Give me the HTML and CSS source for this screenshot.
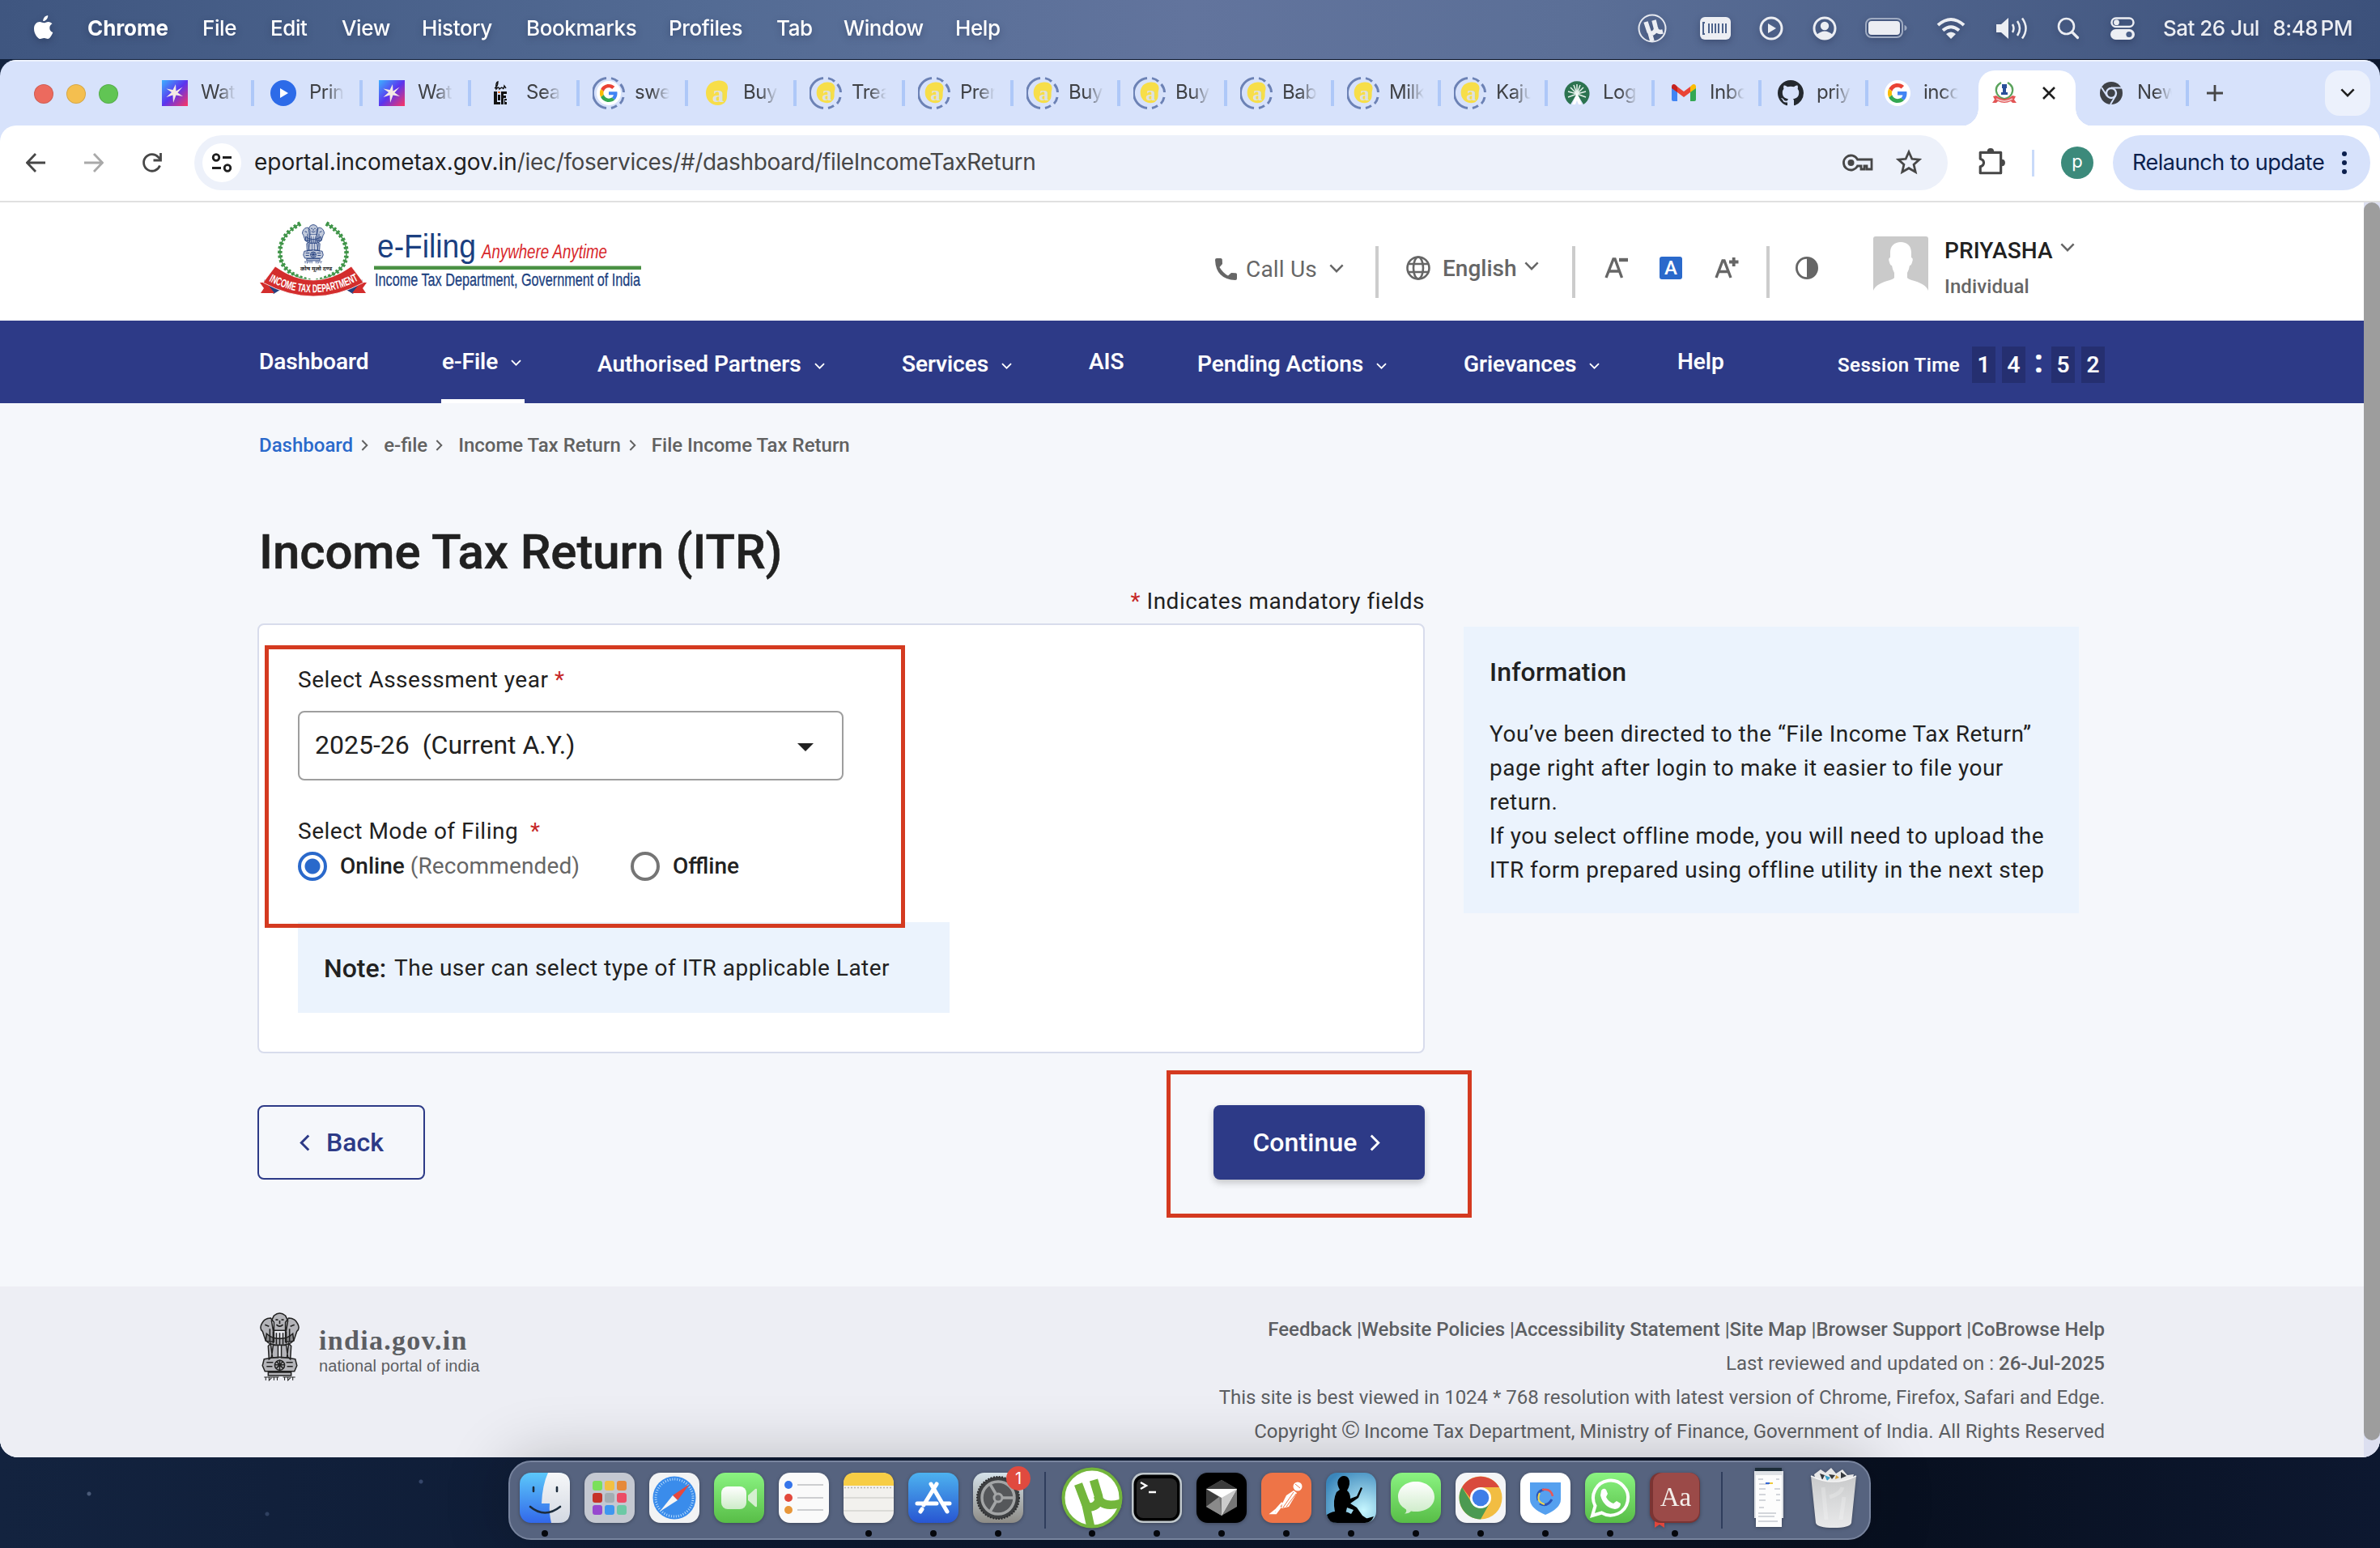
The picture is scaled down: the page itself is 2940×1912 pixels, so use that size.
FILE: index.html
```html
<!DOCTYPE html>
<html lang="en">
<head>
<meta charset="utf-8">
<title>Income Tax Return (ITR)</title>
<link rel="stylesheet" href="styles.css">
</head>
<body>
<svg class="defs" width="0" height="0" aria-hidden="true">
  <defs>
    <linearGradient id="gPurple" x1="0" y1="0" x2="1" y2="1"><stop offset="0" stop-color="#3db0ff"/><stop offset=".5" stop-color="#5a35ee"/><stop offset="1" stop-color="#ff3560"/></linearGradient>
    <linearGradient id="gFinder" x1="0" y1="0" x2="0" y2="1"><stop offset="0" stop-color="#5cc8fa"/><stop offset="1" stop-color="#3268ea"/></linearGradient>
    <linearGradient id="gGrey" x1="0" y1="0" x2="0" y2="1"><stop offset="0" stop-color="#f6f7f9"/><stop offset="1" stop-color="#d3d8e2"/></linearGradient>
    <linearGradient id="gGreen" x1="0" y1="0" x2="0" y2="1"><stop offset="0" stop-color="#8af381"/><stop offset="1" stop-color="#58bd47"/></linearGradient>
    <linearGradient id="gBlue" x1="0" y1="0" x2="0" y2="1"><stop offset="0" stop-color="#4db2ef"/><stop offset="1" stop-color="#2856d2"/></linearGradient>
    <linearGradient id="gSet" x1="0" y1="0" x2="0" y2="1"><stop offset="0" stop-color="#d5e2ea"/><stop offset="1" stop-color="#8d8b86"/></linearGradient>
    <radialGradient id="gKindle" cx=".75" cy=".75" r=".9"><stop offset="0" stop-color="#c6f7ff"/><stop offset="1" stop-color="#3a86bb"/></radialGradient>
    <linearGradient id="gTrash" x1="0" y1="0" x2="0" y2="1"><stop offset="0" stop-color="#c9cacb"/><stop offset="1" stop-color="#e9e9ea"/></linearGradient>
    <linearGradient id="gBubble" x1="0" y1="0" x2="0" y2="1"><stop offset="0" stop-color="#ffffff"/><stop offset="1" stop-color="#cdebc8"/></linearGradient>
  </defs>
  <symbol id="chev" viewBox="0 0 20 12"><path d="M1.5 1.5 10 10l8.500-8.500" fill="none" stroke="currentColor" stroke-width="2.800"/></symbol>
  <symbol id="chevr" viewBox="0 0 12 20"><path d="M1.500 1.500 10 10l-8.500 8.500" fill="none" stroke="currentColor" stroke-width="2.800"/></symbol>
  <symbol id="spark" viewBox="0 0 32 32"><path fill="url(#gPurple)" d="M0 0h32v32H0z"/><path fill="#f4eae4" d="m17 5 .5 8.500 8-5-6 7 6.500 4.500-8.500-1.500-3.500 9.500-.5-9.500-8 2.500 6.500-6-6.500-4.500 8 1.500z"/></symbol>
  <symbol id="ring" viewBox="0 0 40 40"><path fill="none" stroke="#6c82b5" stroke-width="3" d="M17 1.600A18.500 18.500 0 0 0 17 38.400M23 1.600q5 1 8 4M34.500 9q4 5 4 10M38 25q-1 5-4 8M30 35.500q-3 2-7 3"/></symbol>
  <symbol id="yel" viewBox="0 0 32 32"><path fill="#f7de49" d="M15 1c9-2 15 3 14 10-1 3-1 5-1 9 0 7-5 11-11 11C9 31 2 25 2 16 2 8 7 2 15 1z"/><text x="10" y="27" font-family="Liberation Serif, serif" font-weight="700" font-size="29" fill="#d7e2fb" fill-opacity=".85">a</text></symbol>
  <symbol id="goog" viewBox="0 0 48 48"><path fill="#EA4335" d="M24 9.500c3.500 0 6.700 1.200 9.200 3.600l6.900-6.900C35.900 2.400 30.500 0 24 0 14.600 0 6.500 5.400 2.600 13.200l8 6.200C12.400 13.700 17.700 9.500 24 9.500z"/><path fill="#4285F4" d="M47 24.500c0-1.600-.2-3.100-.4-4.500H24v9h12.900c-.6 3-2.200 5.500-4.800 7.200l7.700 6C44.400 38 47 31.800 47 24.500z"/><path fill="#FBBC05" d="M10.500 28.600a14.500 14.500 0 0 1 0-9.200l-8-6.200a24 24 0 0 0 0 21.600z"/><path fill="#34A853" d="M24 48c6.500 0 11.900-2.100 15.900-5.800l-7.700-6c-2.200 1.500-5 2.300-8.200 2.300-6.300 0-11.600-4.200-13.500-9.900l-8 6.200C6.500 42.600 14.600 48 24 48z"/></symbol>
  <symbol id="lion" viewBox="0 0 50 84">
    <g fill="currentColor" fill-opacity=".28" stroke="currentColor" stroke-width="1.500">
      <path d="M18 4q7-6 14 0l3 6-2 12H17L15 10zM14 7q-8 0-11 7-3 6 1 9l4 12 10 1V12zM36 7q8 0 11 7 3 6-1 9l-4 12-10 1V12z"/>
      <path d="M9 26l-1 8q4 6 17 6t17-6l-1-8q-6 6-16 6T9 26z"/>
      <path d="M17 40h6v15h-8zM27 40h6l2 15h-8zM11 41l3-3 2 16-4 3zM39 41l-3-3-2 16 4 3z"/>
      <path d="M6 57q19-5 38 0l2 8-3 7H7l-3-7z"/><path d="M11 73h28v4H11z"/>
    </g>
    <path fill="none" stroke="currentColor" stroke-width="1.600" d="M20 9h3M27 9h3M21 15q4 4 8 0M25 10v4M7 15l5 2M38 17l5-2M13 20v16M17 23v15M21 25v14M25 25v15M29 25v14M33 23v15M37 20v16M9 61h8M33 61h8M9 66h7M34 66h7M25 58v13M19 64h12M21 60l8 8M29 60l-8 8"/>
    <circle cx="25" cy="64.500" r="6" fill="none" stroke="currentColor" stroke-width="1.500"/>
    <path stroke="currentColor" stroke-width="1" fill="none" d="M6 79h18M29 79h15M8 79v4M12 79v4l3-3M18 79v4M22 79v4M31 79v4M35 79v4l3-3M41 79v4"/>
  </symbol>
</svg>

<header class="menubar">
  <svg class="apple" viewBox="0 0 26 32"><path fill="#fff" d="M18.200 1c.2 2-.6 3.800-1.700 5-1.100 1.300-2.700 2.200-4.300 2.100-.2-1.800.7-3.700 1.700-4.900C15 2 16.800 1.100 18.200 1zM23.500 11.300c-2 1.200-3.200 2.900-3.200 5.200 0 2.700 1.600 4.700 4 5.600-1 2.900-3.600 8-6.300 8-1.700 0-2.400-1-4.500-1s-2.900 1-4.500 1C5.600 30.100 1 23.800 1 17.400c0-5.300 3.400-8.400 7-8.400 2.100 0 3.900 1.300 5.200 1.300 1.200 0 3.200-1.400 5.500-1.400 2 0 3.700.9 4.800 2.400z"/></svg>
  <nav class="menus"><b>Chrome</b><span>File</span><span>Edit</span><span>View</span><span>History</span><span>Bookmarks</span><span>Profiles</span><span>Tab</span><span>Window</span><span>Help</span></nav>
  <div class="status">
    <svg width="36" height="36" viewBox="0 0 36 36"><circle cx="18" cy="18" r="16.500" fill="none" stroke="#e6e9f0" stroke-width="2"/><path fill="none" stroke="#eceef3" stroke-width="5.500" d="M10 10l4 12q2 4 6 1t2-7L20 8M22 16q1 8 9 6M15 23l3 11"/></svg>
    <svg width="38" height="28" viewBox="0 0 38 28"><rect width="38" height="28" rx="6" fill="#eceef3"/><path stroke="#4d638c" stroke-width="2" d="M6 7H4v14h2M11 8v12M15 8v12M19 8v12M23 8v12M28 8v12M32 8v12" fill="none"/></svg>
    <svg width="30" height="30" viewBox="0 0 30 30"><circle cx="15" cy="15" r="13" fill="none" stroke="#eceef3" stroke-width="3"/><path fill="#eceef3" d="M11 9l10 6-10 6z"/></svg>
    <svg width="30" height="30" viewBox="0 0 30 30"><circle cx="15" cy="15" r="13" fill="none" stroke="#eceef3" stroke-width="3"/><circle cx="15" cy="12" r="5.200" fill="#eceef3"/><path fill="#eceef3" d="M5 23q10-9 20 0-10 9-20 0z"/></svg>
    <svg width="52" height="26" viewBox="0 0 52 26"><rect x="1" y="1" width="45" height="23" rx="7" fill="none" stroke="#9fabc2" stroke-width="2"/><rect x="4" y="4" width="39" height="17" rx="4" fill="#eceef3"/><path fill="#9fabc2" d="M48.500 9q3 1 3 3.500t-3 3.500z"/></svg>
    <svg width="36" height="28" viewBox="0 0 36 28"><path fill="none" stroke="#eceef3" stroke-width="4" d="M2 10q16-14 32 0M8 16.500q10-8.500 20 0"/><path fill="#eceef3" d="M12 21q6-5 12 0l-6 6z"/></svg>
    <svg width="42" height="28" viewBox="0 0 42 28"><path fill="#eceef3" d="M1 9h6l9-8v26l-9-8H1z"/><path fill="none" stroke="#eceef3" stroke-width="2.500" d="M21 9q3 5 0 10M27 5q6 9 0 18M33 1.500q9 12.500 0 25"/></svg>
    <svg width="28" height="28" viewBox="0 0 28 28"><circle cx="11.500" cy="11.500" r="9.500" fill="none" stroke="#eceef3" stroke-width="2.600"/><path stroke="#eceef3" stroke-width="3.200" stroke-linecap="round" d="m18.500 18.500 7 7"/></svg>
    <svg width="30" height="28" viewBox="0 0 30 28"><rect x="1.500" y="1.500" width="27" height="10.500" rx="5.200" fill="none" stroke="#eceef3" stroke-width="2.500"/><circle cx="7.500" cy="6.700" r="3.400" fill="#eceef3"/><rect y="15" width="30" height="13" rx="6.500" fill="#eceef3"/><circle cx="23" cy="21.500" r="3.600" fill="#4a5f88"/></svg>
    <span class="date">Sat 26 Jul</span><span class="clock">8:48 PM</span>
  </div>
</header>

<section class="window">
  <div class="tabstrip">
    <div class="lights"><i class="red"></i><i class="amber"></i><i class="green"></i></div>
    <div class="tab w134"><svg><use href="#spark"/></svg><span>Wat</span></div>
    <div class="tab w134"><svg viewBox="0 0 32 32"><circle cx="16" cy="16" r="16" fill="#2d6be8"/><path fill="#fff" d="m12 10 10 6-10 6z"/></svg><span>Prin</span></div>
    <div class="tab w134"><svg><use href="#spark"/></svg><span>Wat</span></div>
    <div class="tab w134"><svg viewBox="0 0 32 32"><path fill="none" stroke="#111" stroke-width="1.400" d="M9 10q4-2 4-8-3 1-2 9 3-4 4 0 3-3 4-1 1 2 2-3l2 3"/><path fill="#111" d="M8 14h4v13h4v3H8zM13 18h3v7h-3zM17 14h7v3h-4v2h3v3h-3v8h-3zM21 23h3v2h-2v2h2v3h-3z"/><path fill="#ef7d33" d="M13 14h3v2h-3z"/></svg><span>Sea</span></div>
    <div class="tab w134 ringed"><svg viewBox="0 0 40 40"><use href="#ring"/><circle cx="20" cy="20" r="15" fill="#fff"/><use href="#goog" x="9" y="9" width="22" height="22"/></svg><span>swe</span></div>
    <div class="tab w134"><svg><use href="#yel"/></svg><span>Buy</span></div>
    <div class="tab w134 ringed"><svg viewBox="0 0 40 40"><use href="#ring"/><use href="#yel" x="7" y="6" width="27" height="27"/></svg><span>Trea</span></div>
    <div class="tab w134 ringed"><svg viewBox="0 0 40 40"><use href="#ring"/><use href="#yel" x="7" y="6" width="27" height="27"/></svg><span>Pren</span></div>
    <div class="tab ringed"><svg viewBox="0 0 40 40"><use href="#ring"/><use href="#yel" x="7" y="6" width="27" height="27"/></svg><span>Buy</span></div>
    <div class="tab ringed"><svg viewBox="0 0 40 40"><use href="#ring"/><use href="#yel" x="7" y="6" width="27" height="27"/></svg><span>Buy</span></div>
    <div class="tab ringed"><svg viewBox="0 0 40 40"><use href="#ring"/><use href="#yel" x="7" y="6" width="27" height="27"/></svg><span>Bab</span></div>
    <div class="tab ringed"><svg viewBox="0 0 40 40"><use href="#ring"/><use href="#yel" x="7" y="6" width="27" height="27"/></svg><span>Milk</span></div>
    <div class="tab ringed"><svg viewBox="0 0 40 40"><use href="#ring"/><use href="#yel" x="7" y="6" width="27" height="27"/></svg><span>Kaju</span></div>
    <div class="tab"><svg viewBox="0 0 32 32"><path fill="#2c7350" d="M8 30A15.500 15.500 0 1 1 24 30l-6-10h-4z"/><path stroke="#e6f2ec" stroke-width="1.500" d="M16 17V5M16 17l-4-11M16 17 8 9M16 17 5 14M16 17 20 6M16 17l8-8M16 17l11-3M16 17l11 4M16 17 5 21"/><path fill="#fff" d="m16 15 6 15h-4l-2-5-2 5h-4z"/></svg><span>Log</span></div>
    <div class="tab"><svg viewBox="0 0 32 32"><path fill="#4285f4" d="M1 8v16q0 2 2 2h5V14z"/><path fill="#34a853" d="M31 8v16q0 2-2 2h-5V14z"/><path fill="#fbbc04" d="M24 8v7l7-5V8c0-3-3-4-5-2z"/><path fill="#c5221f" d="M8 15V8L6 6C4 4 1 5 1 8v2z"/><path fill="#ea4335" d="M8 8v7l8 6 8-6V8l-8 6z"/></svg><span>Inbo</span></div>
    <div class="tab"><svg viewBox="0 0 16 16"><path fill="#24292f" d="M8 0C3.580 0 0 3.580 0 8c0 3.540 2.290 6.530 5.470 7.590.4.070.55-.17.55-.38 0-.19-.01-.82-.01-1.490-2.010.37-2.530-.49-2.690-.94-.09-.23-.48-.94-.82-1.130-.28-.15-.68-.52-.01-.53.63-.01 1.080.58 1.230.82.72 1.210 1.870.87 2.330.66.07-.52.28-.87.51-1.070-1.780-.2-3.640-.89-3.640-3.950 0-.87.31-1.590.82-2.150-.08-.2-.36-1.020.08-2.120 0 0 .67-.21 2.200.82a7.600 7.600 0 0 1 4 0c1.530-1.040 2.200-.82 2.200-.82.44 1.100.16 1.920.08 2.120.51.56.82 1.270.82 2.150 0 3.070-1.870 3.750-3.650 3.950.29.25.54.73.54 1.480 0 1.070-.01 1.930-.01 2.200 0 .21.15.46.55.38A8 8 0 0 0 16 8c0-4.420-3.580-8-8-8z"/></svg><span>priy</span></div>
    <div class="tab nosep"><svg viewBox="0 0 32 32"><circle cx="16" cy="16" r="16" fill="#fff"/><use href="#goog" x="4" y="4" width="24" height="24"/></svg><span>inco</span></div>
    <div class="tab active"><svg viewBox="0 0 32 32"><path fill="none" stroke="#5aa35c" stroke-width="2.200" d="M12 3Q3 8 7 17q3 5 9 6 6-1 9-6 4-9-5-14"/><path fill="#2a4f9a" d="M13 5h6v5h-1v5h2v3h-8v-3h2v-5h-1z"/><path fill="#df4242" fill-opacity=".9" d="M2 20l4-1q10 8 20 0l4 1-2 4 3 4h-5l-2-2q-8 4-16 0l-2 2H1l3-4z"/><path stroke="#fff" stroke-opacity=".6" stroke-width="2" fill="none" d="M6 23q10 6 20 0"/></svg><svg class="x" viewBox="0 0 16 16"><path d="m1 1 14 14M15 1 1 15" stroke="#1f1f1f" stroke-width="2.600"/></svg></div>
    <div class="tab"><svg viewBox="0 0 32 32"><circle cx="16" cy="16" r="14" fill="#3f4247"/><circle cx="16" cy="16" r="6" fill="#3f4247" stroke="#d7e2fb" stroke-width="2.400"/><path stroke="#d7e2fb" stroke-width="2" d="M16 9.500h13M10.500 19 4 9M21.500 19 15 30"/></svg><span>New</span></div>
    <svg class="plus" viewBox="0 0 20 20"><path stroke="#474747" stroke-width="2.800" d="M10 0v20M0 10h20"/></svg>
    <div class="tabsearch"><svg width="18" height="11"><use href="#chev"/></svg></div>
  </div>

  <div class="toolbar">
    <svg class="back" viewBox="0 0 24 24"><path d="M24 12H2M12 1 1.500 12 12 23" fill="none" stroke="#474747" stroke-width="2.800"/></svg>
    <svg class="fwd" viewBox="0 0 24 24"><path d="M0 12h22M12 1l10.500 11L12 23" fill="none" stroke="#a9a9a9" stroke-width="2.800"/></svg>
    <svg class="reload" viewBox="0 0 26 26"><path d="M22.500 16.500A10.300 10.300 0 1 1 20.500 6l3 3" fill="none" stroke="#474747" stroke-width="2.800"/><path d="M23.500 1v9h-9" fill="none" stroke="#474747" stroke-width="2.800"/></svg>
    <div class="omnibox">
      <span class="tune"><svg width="26" height="24" viewBox="0 0 26 24" fill="none" stroke="#1f1f1f" stroke-width="2.800"><circle cx="6" cy="5.500" r="3.800"/><path d="M14 5.500h11M1 18.500h11"/><circle cx="20" cy="18.500" r="3.800"/></svg></span>
      <span class="url"><b>eportal.incometax.gov.in</b>/iec/foservices/#/dashboard/fileIncomeTaxReturn</span>
      <svg class="key" viewBox="0 0 38 22"><path fill="none" stroke="#474747" stroke-width="2.800" d="M18.500 7A9 9 0 1 0 18.500 15H23v4h4v-4h3v4h6V7z"/><circle cx="10.500" cy="11" r="4" fill="#474747"/></svg>
      <svg class="star" viewBox="0 0 30 30"><path fill="none" stroke="#474747" stroke-width="2.600" d="m15 3.500 3.600 8 8.600.8-6.500 5.800 2 8.600L15 22.200l-7.700 4.500 2-8.600-6.500-5.800 8.600-.8z"/></svg>
    </div>
    <svg class="ext" viewBox="0 0 34 34"><path fill="none" stroke="#474747" stroke-width="3" stroke-linejoin="round" d="M4 6h24v24H4v-7.500q4-1 4-4.500t-4-4.500z"/><path fill="#474747" d="M12 5q0-4 4-4t4 4zM29 14q4 0 4 4t-4 4z"/></svg>
    <i class="tsep"></i>
    <span class="profile">p</span>
    <div class="relaunch"><span>Relaunch to update</span><svg width="8" height="30" viewBox="0 0 8 30" fill="#0b1f4d"><circle cx="4" cy="4" r="3"/><circle cx="4" cy="15" r="3"/><circle cx="4" cy="26" r="3"/></svg></div>
  </div>

  <div class="viewport">
    <div class="site">
      <div class="site-head">
        <svg class="logo" viewBox="320 272 480 100" width="480" height="100">
          <g fill="none" stroke="#3f9448" stroke-width="5.500" stroke-dasharray="3 2.500"><path d="M371 276Q344 291 346 315q2 23 37 32"/><path d="M403 276q26 15 25 39-2 23-37 32"/></g>
          <g fill="none" stroke="#3f9448" stroke-width="1.500"><path d="M371 276Q344 291 346 315q2 23 37 32"/><path d="M403 276q26 15 25 39-2 23-37 32"/></g>
          <svg x="372" y="277" width="30" height="49" color="#24407f"><use href="#lion"/></svg>
          <text x="371" y="334" font-family="Noto Sans, sans-serif" font-size="7" font-weight="700" fill="#222">कोष मूलो दण्ड</text>
          <path fill="#24407f" d="m326 346 10-4 10 16-8 5zM448 346l-10-4-10 16 8 5z"/>
          <path fill="#d32d2d" d="M321 349h8l10 13h-17l4-6zM453 349h-8l-10 13h17l-4-6z"/>
          <path fill="#d32d2d" stroke="#fff" stroke-width=".8" d="m340 329-15 20q62 34 124 0l-15-20q-47 34-94 0z"/>
          <path id="arc" fill="none" d="M332 347q55 29 111-1"/>
          <text font-family="Liberation Sans, sans-serif" font-weight="700" font-size="14" fill="#fff"><textPath href="#arc" textLength="116" lengthAdjust="spacingAndGlyphs">INCOME TAX DEPARTMENT</textPath></text>
          <text x="466" y="318" font-family="Liberation Sans, sans-serif" font-size="40" fill="#1b3f80" textLength="122" lengthAdjust="spacingAndGlyphs">e-Filing</text>
          <text x="595" y="319" font-family="Liberation Sans, sans-serif" font-style="italic" font-size="24.500" fill="#d8282c" textLength="155" lengthAdjust="spacingAndGlyphs">Anywhere Anytime</text>
          <path fill="#4a9144" d="M462 328.500h330v4.500H462z"/>
          <text x="463" y="353" font-family="Liberation Sans, sans-serif" font-size="21.500" fill="#1b3f80" stroke="#1b3f80" stroke-width=".3" textLength="328" lengthAdjust="spacingAndGlyphs">Income Tax Department, Government of India</text>
        </svg>
        <div class="tools">
          <div class="call"><svg width="28" height="28" viewBox="0 0 28 28"><path fill="#666" d="M1 2q0-2 2-2h5q1.500 0 1.800 1.500L10 7l-3.500 4q4 7 10.500 10.500l4-3.500 5.500.3q1.500.3 1.500 1.700v5q0 2-2 2Q2 26 1 2z"/></svg><span>Call Us</span><svg class="cv" width="18" height="11"><use href="#chev"/></svg></div>
          <i class="vsep"></i>
          <div class="lang"><svg width="32" height="32" viewBox="0 0 32 32" fill="none" stroke="#666" stroke-width="2.600"><circle cx="16" cy="16" r="13.500"/><ellipse cx="16" cy="16" rx="6" ry="13.500"/><path d="M3 11h26M3 21h26"/></svg><span>English</span><svg class="cv" width="18" height="11"><use href="#chev"/></svg></div>
          <i class="vsep"></i>
          <svg class="aminus" width="30" height="28" viewBox="0 0 30 28"><path fill="none" stroke="#666" stroke-width="3.400" d="M2 26 11 3h2l8.500 23M5.500 18h13"/><path stroke="#666" stroke-width="4.400" d="M18 4h11"/></svg>
          <span class="anormal">A</span>
          <svg class="aplus" width="30" height="28" viewBox="0 0 30 28"><path fill="none" stroke="#666" stroke-width="3.400" d="M2 26 10 5h2l8 21M5 18.500h12"/><path stroke="#666" stroke-width="3.800" d="M18 6.500h11.500M23.700 1v11"/></svg>
          <i class="vsep s3"></i>
          <svg class="contrast" width="28" height="28" viewBox="0 0 28 28"><circle cx="14" cy="14" r="12.600" fill="#fff" stroke="#666" stroke-width="2.800"/><path fill="#666" d="M14 1a13 13 0 0 1 0 26z"/></svg>
          <svg class="avatar" width="68" height="68" viewBox="0 0 68 68"><rect width="68" height="68" rx="3" fill="#cacaca"/><path fill="#fff" d="M34 7c8 0 13 5 13 13v6q3 1 1 6-1 4-3 4-1 6-3 9v6q1 2 9 4 16 5 17 13H0q1-8 17-13 8-2 9-4v-6q-2-3-3-9-2 0-3-4-2-5 1-6v-6c0-8 5-13 13-13z"/></svg>
          <div class="who"><div class="name">PRIYASHA<svg width="18" height="11"><use href="#chev"/></svg></div><div class="role">Individual</div></div>
        </div>
      </div>

      <nav class="nav">
        <a>Dashboard</a>
        <a class="current">e-File<svg width="13" height="8"><use href="#chev"/></svg></a>
        <a class="low">Authorised Partners<svg width="13" height="8"><use href="#chev"/></svg></a>
        <a class="low">Services<svg width="13" height="8"><use href="#chev"/></svg></a>
        <a>AIS</a>
        <a class="low">Pending Actions<svg width="13" height="8"><use href="#chev"/></svg></a>
        <a class="low">Grievances<svg width="13" height="8"><use href="#chev"/></svg></a>
        <a>Help</a>
        <div class="session"><span>Session Time</span><b>1</b><b>4</b><em>:</em><b>5</b><b>2</b></div>
      </nav>

      <main class="main">
        <div class="crumbs"><a>Dashboard</a><svg><use href="#chevr"/></svg><span>e-file</span><svg><use href="#chevr"/></svg><span>Income Tax Return</span><svg><use href="#chevr"/></svg><span>File Income Tax Return</span></div>
        <h1>Income Tax Return (ITR)</h1>
        <p class="mandatory"><i>*</i> Indicates mandatory fields</p>
        <div class="cols">
          <div class="card">
            <label class="lbl">Select Assessment year <i>*</i></label>
            <div class="select"><span>2025-26&nbsp; (Current A.Y.)</span><svg width="20" height="10"><path fill="#212121" d="M0 0h20L10 10z"/></svg></div>
            <label class="lbl mode">Select Mode of Filing&nbsp; <i>*</i></label>
            <div class="radios"><span class="radio on"></span><span class="opt online">Online <small>(Recommended)</small></span><span class="radio"></span><span class="opt">Offline</span></div>
            <div class="note"><b>Note:</b><span>The user can select type of ITR applicable Later</span></div>
            <div class="mark mark-form"></div>
          </div>
          <aside class="info">
            <h2>Information</h2>
            <p>You’ve been directed to the “File Income Tax Return”<br>page right after login to make it easier to file your<br>return.<br>If you select offline mode, you will need to upload the<br>ITR form prepared using offline utility in the next step</p>
          </aside>
        </div>
        <div class="actions">
          <button class="btn-back"><svg width="13" height="21"><use href="#chevr"/></svg>Back</button>
          <div class="next"><button class="btn-next">Continue<svg width="13" height="21"><use href="#chevr"/></svg></button><div class="mark mark-next"></div></div>
        </div>
      </main>

      <footer class="footer">
        <svg class="emblem"><use href="#lion"/></svg>
        <div class="gov"><b>india.gov.in</b><span>national portal of india</span></div>
        <div class="legal">
          <p class="links">Feedback |Website Policies |Accessibility Statement |Site Map |Browser Support |CoBrowse Help</p>
          <p>Last reviewed and updated on : <b>26-Jul-2025</b></p>
          <p>This site is best viewed in 1024 * 768 resolution with latest version of Chrome, Firefox, Safari and Edge.</p>
          <p>Copyright <span class="copy">©</span> Income Tax Department, Ministry of Finance, Government of India. All Rights Reserved</p>
        </div>
      </footer>
    </div>
    <div class="scroll"><i></i></div>
  </div>
</section>

<div class="dock">
  <div class="app run"><svg viewBox="0 0 62 62"><rect width="62" height="62" rx="14" fill="url(#gFinder)"/><path fill="url(#gGrey)" d="M35 0h13q14 0 14 14v34q0 14-14 14h-9q-3-13-2-24H27Q28 15 35 0z"/><path fill="none" stroke="#1c2c3c" stroke-width="2.600" stroke-linecap="round" d="M17 18v5M46 18v5M13 42q18 15 37 0"/></svg></div>
  <div class="app"><svg viewBox="0 0 62 62"><rect width="62" height="62" rx="14" fill="#c4c8d1"/><rect x="10" y="10" width="12" height="12" rx="3" fill="#7be05a"/><rect x="25" y="10" width="12" height="12" rx="3" fill="#f2c043"/><rect x="40" y="10" width="12" height="12" rx="3" fill="#e6893a"/><rect x="10" y="25" width="12" height="12" rx="3" fill="#c63328"/><rect x="25" y="25" width="12" height="12" rx="3" fill="#a3adb3"/><rect x="40" y="25" width="12" height="12" rx="3" fill="#ec4d66"/><rect x="10" y="40" width="12" height="12" rx="3" fill="#9748cf"/><rect x="25" y="40" width="12" height="12" rx="3" fill="#3f97f0"/><rect x="40" y="40" width="12" height="12" rx="3" fill="#6cc9a5"/></svg></div>
  <div class="app"><svg viewBox="0 0 62 62"><rect width="62" height="62" rx="14" fill="#f2f3f4"/><circle cx="31" cy="31" r="26.500" fill="#3a8ceb"/><circle cx="31" cy="31" r="23" fill="none" stroke="#b9dcfb" stroke-width="3" stroke-dasharray="1 2"/><path fill="#e8473c" d="m50 14-15 20-6-6z"/><path fill="#f5f5f5" d="m13 48 16-20 6 6z"/></svg></div>
  <div class="app"><svg viewBox="0 0 62 62"><rect width="62" height="62" rx="14" fill="url(#gGreen)"/><rect x="9" y="17" width="31" height="28" rx="8" fill="url(#gBubble)"/><path fill="#d5efd0" d="m42 28 9-8q2-1 2 1v20q0 2-2 1l-9-8z"/></svg></div>
  <div class="app"><svg viewBox="0 0 62 62"><rect width="62" height="62" rx="14" fill="#fafafa"/><circle cx="12" cy="15" r="5" fill="#3574ea"/><circle cx="12" cy="31" r="5" fill="#e2493c"/><circle cx="12" cy="46" r="5" fill="#e8973a"/><path stroke="#bfc0c2" stroke-width="1.500" d="M23 15h32M23 31h32M23 46h32"/></svg></div>
  <div class="app run"><svg viewBox="0 0 62 62"><rect width="62" height="62" rx="14" fill="#f2f1ee"/><path fill="#f7cd45" d="M0 16v-2Q0 0 14 0h34q14 0 14 14v2z"/><path stroke="#b8b5ad" stroke-width="1.500" stroke-dasharray="2 2" d="M1 18.500h60"/><path stroke="#d4d3d0" stroke-width="1.400" d="M0 31h62M0 47h62"/></svg></div>
  <div class="app run"><svg viewBox="0 0 62 62"><rect width="62" height="62" rx="14" fill="url(#gBlue)"/><path fill="none" stroke="#fff" stroke-width="5" stroke-linecap="round" d="m28 14 20 34M35 14 19 40M11 38h24M43 38h8M17 45l-2 3"/></svg></div>
  <div class="app run"><svg viewBox="0 0 62 62"><rect width="62" height="62" rx="14" fill="url(#gSet)"/><circle cx="31" cy="31" r="26" fill="#3d3f41" stroke="#2d2e30" stroke-width="2" stroke-dasharray="2 1.500"/><circle cx="31" cy="31" r="20" fill="#55575a" stroke="#a3a5a6" stroke-width="3.500"/><circle cx="31" cy="31" r="5" fill="#606265" stroke="#a3a5a6" stroke-width="3"/><path stroke="#a3a5a6" stroke-width="3.500" d="M37 31h13M28 26l-7-12M28 36l-7 12"/></svg><span class="badge">1</span></div>
  <i class="dsep"></i>
  <div class="app run"><svg viewBox="0 0 62 62"><circle cx="31" cy="31" r="35.500" fill="#fff" stroke="#73b63c" stroke-width="4"/><path fill="none" stroke="#73b63c" stroke-width="10.500" d="m14 14 9 24q4 7 11 3t5-12L33 9M38 29q4 15 28 9"/><path fill="#73b63c" d="m17 34 10-1 7 32-10 1z"/></svg></div>
  <div class="app run"><svg viewBox="0 0 62 62"><rect width="62" height="62" rx="14" fill="#c0c8cc"/><rect x="2.500" y="2.500" width="57" height="57" rx="12" fill="#000"/><rect x="6" y="7" width="50" height="49" rx="8" fill="#262626"/><path fill="none" stroke="#fff" stroke-width="2.400" d="m11 12 7 4-7 4M21 24h9"/></svg></div>
  <div class="app run"><svg viewBox="0 0 62 62"><rect width="62" height="62" rx="14" fill="#000"/><path fill="#777" d="m31 9 19 11v22L31 53 12 42V20z"/><path fill="#3c3c3c" d="M12 20v22l16-12zM31 9 12 20h38z"/><path fill="#8a8a8a" d="M12 42 28 30l3 23z"/><path fill="#fff" d="M12 20h38L31 53V31z"/><path fill="#ccc" d="M50 20 31 53V31z"/></svg></div>
  <div class="app run"><svg viewBox="0 0 62 62"><rect width="62" height="62" rx="14" fill="#ee7447"/><circle cx="45" cy="17" r="5.500" fill="#fff"/><path fill="#fff" d="m40 22 4 3-10 17-9 2 1-6 5-10z"/><path fill="none" stroke="#fff" stroke-width="2.500" d="m26 37-8 9-5 4h5l6-8"/><path stroke="#ee7447" stroke-width="1" d="m40 24-13 19M43 26l-12 16M42 14l6 5"/></svg></div>
  <div class="app run"><svg viewBox="0 0 62 62"><rect width="62" height="62" rx="14" fill="url(#gKindle)"/><path fill="#000" d="M15 9q4-7 11-4 5 4 2 13l-2 4q4 3 4 10l8-3 5-11 2 1-5 12-10 7 8 5 7 10 6 4-2 4H25L34 46l-8-3-2 8-13-3Q8 34 13 24l4-3q-4-7-2-12z"/><path fill="#000" d="M1 52q10-7 26-3l18 9 14-4q-3 8-11 8H14Q3 62 1 52z"/></svg></div>
  <div class="app run"><svg viewBox="0 0 62 62"><rect width="62" height="62" rx="14" fill="url(#gGreen)"/><path fill="url(#gBubble)" d="M31 11c13 0 23 8 23 19S44 48 31 48q-3 0-6-.5-2 3-8 3 3-2 2-5Q9 40 9 30c0-11 9-19 22-19z"/></svg></div>
  <div class="app run"><svg viewBox="0 0 62 62"><rect width="62" height="62" rx="14" fill="#f4f5f7"/><circle cx="31" cy="31" r="26.500" fill="#f2bd42"/><path fill="#d94a3d" d="M8 18a26.500 26.500 0 0 1 46 0H31L22 36z"/><path fill="#4c9a52" d="M8 18a26.500 26.500 0 0 0 23 39.500L42 38 20 37z"/><circle cx="31" cy="31" r="13" fill="#fff"/><circle cx="31" cy="31" r="10.300" fill="#3f7ee8"/></svg></div>
  <div class="app run"><svg viewBox="0 0 62 62"><rect width="62" height="62" rx="14" fill="#fff"/><path fill="#55a0ef" d="M12 12h38v21q0 11-19 19Q12 44 12 33z"/><path fill="none" stroke="#2a55b8" stroke-width="3" d="M22 34q-3-11 7-13M24 38q9 5 15-5"/><path fill="none" stroke="#e85757" stroke-width="2.500" d="M27 21q11-2 13 8"/><path fill="none" stroke="#f2d84c" stroke-width="2" d="M24 25q-5 11 6 14"/></svg></div>
  <div class="app run"><svg viewBox="0 0 62 62"><rect width="62" height="62" rx="14" fill="url(#gGreen)"/><path fill="none" stroke="#fff" stroke-width="4" d="m9 53 3.500-12a21.500 21.500 0 1 1 8 8.500z"/><path fill="#fff" d="M20 22q3-4 6-1l2 5-2 4q3 6 9 8l4-3 5 3q0 6-7 7-14-2-18-17z"/></svg></div>
  <div class="app run"><svg viewBox="0 0 62 62"><path fill="#e0463c" d="M6 60h12v8l-6-4-6 4z"/><rect width="62" height="62" rx="13" fill="#7b3433"/><rect x="4" width="57" height="60" rx="12" fill="#9b4a48"/><text x="32" y="41" text-anchor="middle" font-family="Liberation Serif, serif" font-size="33" fill="#f3eeea">Aa</text></svg></div>
  <i class="dsep"></i>
  <div class="app"><svg viewBox="0 0 62 62"><path fill="#1c2c38" d="M14-6h33V0H14z"/><path fill="#dfe2e6" d="M13-2h36v58H13z"/><path fill="#fdfdfd" d="M15 3h32v64H15z"/><path stroke="#d3d6db" stroke-width="2" fill="none" d="M18 8h6M40 8h4M19 14h12M19 20h8M38 20h7M19 27h8M40 27h5M19 34h8M40 34h5M19 43h6M18 50h22M18 54h20M18 60h24"/><path fill="#3468d8" d="M27 12h5v2h-5z"/><path fill="#edc93d" d="M32 12h4v2h-4z"/></svg></div>
  <div class="app"><svg viewBox="0 0 62 62"><path fill="#e8e8e8" d="m7 2 8-6 6 4 7-6 6 7 8-5 6 7 8-1-4 12H10z"/><path fill="#34383d" d="m14 1 6 2-3 6zM25 2l8 1-4 5zM40-1l7 5-7 3z"/><path fill="#3aa0c9" d="m20 3 7 3-4 4z"/><path fill="#d8a23b" d="m34 3 4 3-5 2z"/><path fill="url(#gTrash)" d="M3 4q28 14 56 0l-6 58q-2 6-22 6T9 62z"/><path fill="none" stroke="#f4f4f4" stroke-width="1.500" d="M3 4q28 14 56 0"/><path fill="none" stroke="#fff" stroke-opacity=".22" stroke-width="5" d="m18 18 4 40M42 18q-2 8-16 12M44 30l-4 28"/></svg></div>
</div>
</body>
</html>
```
FILE: styles.css
```css
* { box-sizing: border-box; }
body {
  margin: 0; width: 2940px; height: 1912px; overflow: hidden;
  display: flex; flex-direction: column; align-items: center;
  font-family: Roboto, sans-serif; color: #212121;
  background:
    radial-gradient(circle at 110px 1845px, #4a5a78 0 2px, transparent 3px),
    radial-gradient(circle at 330px 1870px, #2f4060 0 2px, transparent 3px),
    radial-gradient(circle at 520px 1830px, #35466a 0 2px, transparent 3px),
    linear-gradient(90deg, #13233f, #0d1a33 35%, #081020 80%, #0d1830);
}
svg { display: block; flex: none; }
.defs { position: absolute; }
i, em { font-style: normal; }
p, h1, h2 { margin: 0; font-weight: 400; }
button { font: inherit; }

/* macOS menu bar */
.menubar {
  width: 100%; height: 73px; flex: none; display: flex; align-items: center;
  padding: 0 34px 3px 41px; font: 500 26px/36px Inter, sans-serif; color: #fff;
  background: linear-gradient(90deg, #3f5680, #536b94 30%, #62749d 50%, #5b6f97 66%, #3c517b);
}
.menubar svg, .menubar span, .menubar b { filter: drop-shadow(0 3px 4px rgba(20,30,60,.35)); }
.apple { width: 26px; height: 32px; margin-bottom: 2px; }
.menus { display: grid; grid-template-columns: 142px 84px 88px 99px 129px 176px 133px 83px 138px 80px; margin-left: 41px; letter-spacing: -.4px; white-space: nowrap; }
.menus b { font-weight: 700; letter-spacing: -.1px; }
.status { display: flex; align-items: center; margin-left: auto; color: #eceef3; white-space: nowrap; width: 883px; }
.status svg + svg { margin-left: 38px; }
.status svg:nth-child(2) { margin-left: 41px; }
.status svg:nth-child(3) { margin-left: 35px; }
.status svg:nth-child(4) { margin-left: 36px; }
.status svg:nth-child(5) { margin-left: 35px; }
.status svg:nth-child(6) { margin-left: 36px; }
.status svg:nth-child(7) { margin-left: 37px; }
.status svg:nth-child(8) { margin-left: 34px; }
.date { margin-left: 35px; width: 136px; letter-spacing: -.5px; }
.clock { letter-spacing: -.5px; word-spacing: -3px; }

/* browser window */
.window { width: 2940px; height: 1726px; margin-top: 1px; flex: none; border-radius: 20px 20px 22px 22px; overflow: hidden; background: #d7e2fb; display: flex; flex-direction: column; }
.tabstrip { height: 81px; flex: none; display: flex; align-items: center; padding: 0 0 2px 42px; font: 400 24px/32px Inter, sans-serif; color: #3f4145; border-top: 2px solid #eef3fd; }
.lights { display: flex; gap: 16px; width: 138px; flex: none; padding-top: 2px; }
.lights i { width: 24px; height: 24px; border-radius: 50%; border: 1px solid rgba(0,0,0,.12); }
.red { background: #ec6a5e; } .amber { background: #f4bf4f; } .green { background: #61c554; }
.tab { width: 132px; height: 32px; flex: none; display: flex; align-items: center; padding-left: 20px; border-right: 4px solid #aec8f8; background-clip: padding-box; }
.tab.w134 { width: 134px; }
.tab > svg { width: 32px; height: 32px; }
.tab span { width: 43px; height: 34px; line-height: 33px; margin: -2px 0 0 16px; overflow: hidden; white-space: nowrap; letter-spacing: -.5px; -webkit-mask-image: linear-gradient(90deg, #000 50%, transparent); mask-image: linear-gradient(90deg, #000 50%, transparent); }
.tab.ringed { padding-left: 16px; }
.tab.ringed > svg { width: 40px; height: 40px; margin: -4px 0; }
.tab.ringed span { margin-left: 12px; }
.tab.nosep { border-color: transparent; }
.tab.active { border: 0; height: 81px; padding-left: 16px; position: relative; z-index: 0; }
.tab.active::before { content: ""; position: absolute; z-index: -1; left: 4px; top: 13px; width: 120px; height: 70px; background: #fff; border-radius: 20px 20px 0 0; }
.tab.active::after { content: ""; position: absolute; z-index: -1; left: -18px; bottom: -1px; width: 164px; height: 22px; background: radial-gradient(circle at 0 0, transparent 21.500px, #fff 22px) left / 22px 22px no-repeat, radial-gradient(circle at 100% 0, transparent 21.500px, #fff 22px) right / 22px 22px no-repeat; }
.tab.active > svg { width: 34px; margin-left: 3px; }
.tab.active > svg.x { width: 16px; height: 16px; margin-left: 30px; }
.plus { width: 20px; height: 20px; margin-left: 22px; }
.tabsearch { width: 56px; height: 56px; margin-left: auto; margin-right: 12px; border-radius: 18px; background: #ecf1fc; display: flex; align-items: center; justify-content: center; color: #1f1f1f; }

.toolbar { height: 95px; flex: none; background: #fff; border-radius: 20px 20px 0 0; border-bottom: 2px solid #e0e0e0; display: flex; align-items: center; padding: 0 12px 1px 32px; font: 400 28px/40px Inter, sans-serif; }
.back, .fwd, .reload { margin-bottom: 1px; }
.back, .fwd { width: 24px; height: 24px; }
.fwd { margin-left: 48px; }
.reload { width: 26px; height: 26px; margin-left: 47px; }
.omnibox { width: 2166px; height: 68px; margin-left: 39px; border-radius: 34px; background: #edf1fa; display: flex; align-items: center; padding: 0 32px 0 10px; }
.tune { width: 48px; height: 48px; border-radius: 50%; background: #fff; display: flex; align-items: center; justify-content: center; }
.url { margin: 0 0 2px 16px; color: #474747; white-space: nowrap; letter-spacing: -.34px; }
.url b { font-weight: 400; color: #1f1f1f; letter-spacing: -.04px; }
.key { width: 38px; height: 22px; margin-left: auto; }
.star { width: 32px; height: 32px; margin-left: 28px; margin-bottom: 2px; }
.ext { width: 36px; height: 36px; margin: 0 0 2px 36px; }
.tsep { width: 3px; height: 33px; background: #c9daf9; margin-left: 32px; }
.profile { width: 40px; height: 40px; margin-left: 33px; border-radius: 50%; background: #3c8a7b; color: #fff; font-size: 22px; line-height: 36px; text-align: center; }
.relaunch { width: 318px; height: 68px; margin-left: auto; border-radius: 34px; background: #d7e2fb; color: #0b1f4d; display: flex; align-items: center; padding-left: 24px; white-space: nowrap; font-size: 27px; letter-spacing: -.5px; }
.relaunch span { width: 258px; }

.viewport { flex: 1; display: flex; min-height: 0; background: #fff; }
.site { width: 2920px; display: flex; flex-direction: column; }
.scroll { width: 20px; background: #dcdff0; }
.scroll i { display: block; height: 1529px; background: #9d9d9d; border-radius: 10px; }

/* portal header */
.site-head { height: 146px; flex: none; padding-left: 320px; display: flex; align-items: center; background: #fff; color: #666; }
.logo { overflow: visible; margin-bottom: 2px; }
.tools { height: 146px; padding-top: 16px; margin-left: 700px; display: flex; align-items: center; font-size: 28px; line-height: 40px; white-space: nowrap; }
.call { display: flex; align-items: center; width: 199px; padding-top: 4px; }
.call span { margin-left: 11px; width: 103px; letter-spacing: .2px; }
.call .cv { margin-bottom: 4px; }
.vsep { width: 4px; height: 64px; margin-top: 10px; background: #ccc; flex: none; }
.lang { display: flex; align-items: center; width: 239px; padding-left: 33px; }
.lang span { margin: 2px 0 0 14px; width: 101px; font-weight: 500; }
.lang .cv { margin-bottom: 6px; }
.aminus { margin-left: 36px; }
.anormal { width: 28px; height: 28px; margin-left: 38px; background: #2a69cb; color: #fff; border-radius: 3px; font-size: 24px; font-weight: 500; line-height: 29px; text-align: center; }
.aplus { margin-left: 40px; }
.vsep.s3 { margin-left: 34px; }
.contrast { margin-left: 32px; }
.avatar { margin: 0 0 11px 68px; }
.who { margin-left: 20px; padding-top: 2px; line-height: 44px; font-weight: 500; }
.name { display: flex; color: #212121; letter-spacing: .1px; }
.name svg { margin: 12px 0 0 9px; color: #666; }
.role { font-size: 24px; letter-spacing: .1px; }

.nav { height: 102px; flex: none; background: #2d3a87; color: #fff; padding-left: 320px; display: grid; grid-template-columns: 225px 193px 376px 231px 134px 329px 264px 198px auto; align-items: center; font-size: 28px; font-weight: 500; line-height: 40px; white-space: nowrap; -webkit-text-stroke: .2px currentColor; }
.nav a { display: flex; align-items: center; }
.nav a svg { margin: 4px 0 0 16px; }
.nav a.low { padding: 5px 0 0; }
.nav a.current { width: 103px; height: 102px; border-bottom: 5px solid #fff; padding: 5px 0 0 1px; justify-self: start; }
.nav a.current svg { margin: 2px 0 0 16px; }
.session { display: flex; align-items: center; padding-top: 7px; font-size: 24px; }
.session span { width: 166px; padding-top: 1px; letter-spacing: .5px; }
.session b { width: 29px; height: 45px; margin-right: 8px; background: #252f70; font-size: 28px; line-height: 46px; text-align: center; font-weight: 500; }
.session em { width: 24px; padding-right: 7px; text-align: center; font-size: 40px; font-weight: 700; margin: 0 0 8px; }

/* main content */
.main { height: 1091px; flex: none; background: #f5f7fb; padding-left: 318px; }
.crumbs { height: 103px; display: flex; align-items: center; padding-left: 2px; font-size: 24px; font-weight: 500; color: #616161; white-space: nowrap; }
.crumbs a { color: #2a69cb; }
.crumbs svg { width: 9px; height: 14px; margin: 0 19px 0 10px; }
h1 { margin-top: 46px; font-size: 60px; line-height: 70px; font-weight: 500; padding-left: 2px; letter-spacing: -.1px; -webkit-text-stroke: .5px currentColor; }
.mandatory { width: 1442px; margin-top: 6px; text-align: right; font-size: 28px; line-height: 40px; letter-spacing: .5px; }
.mandatory i, .lbl i { color: #c62828; }
.cols { display: flex; align-items: flex-start; margin-top: 7px; }
.card { position: relative; width: 1442px; height: 531px; border: 2px solid #d8dcec; border-radius: 8px; background: #fff; padding: 48px 0 0 48px; font-size: 28px; line-height: 40px; letter-spacing: .5px; white-space: nowrap; }
.lbl { display: block; }
.select { width: 674px; height: 86px; margin-top: 18px; border: 2px solid #9e9e9e; border-radius: 8px; padding: 0 35px 3px 19px; display: flex; align-items: center; justify-content: space-between; font-size: 32px; letter-spacing: 0; }
.select svg { margin-top: 6px; }
.mode { margin-top: 43px; }
.radios { height: 36px; margin-top: 5px; display: flex; align-items: center; font-weight: 500; letter-spacing: 0; }
.radio { width: 36px; height: 36px; border: 4px solid #757575; border-radius: 50%; }
.radio.on { border-color: #2a69cb; background: radial-gradient(circle, #2a69cb 9px, #fff 10px); }
.opt { margin-left: 16px; }
.online { width: 359px; }
.opt small { font-size: 28px; font-weight: 400; color: #666; letter-spacing: .12px; }
.note { width: 805px; height: 112px; margin-top: 51px; background: #ebf3fd; display: flex; align-items: center; padding: 2px 0 0 32px; }
.note b { font-size: 32px; font-weight: 500; width: 87px; letter-spacing: 0; }
.mark { position: absolute; border: 5px solid #d43a20; }
.mark-form { left: 7px; top: 25px; width: 791px; height: 349px; }
.info { width: 760px; height: 354px; margin: 4px 0 0 48px; background: #ebf3fd; padding: 36px 0 0 32px; white-space: nowrap; }
.info h2 { font-size: 32px; line-height: 40px; font-weight: 500; letter-spacing: .15px; }
.info p { font-size: 28px; line-height: 42px; margin-top: 36px; letter-spacing: .49px; }
.actions { display: flex; justify-content: space-between; width: 1442px; margin-top: 64px; font-size: 32px; font-weight: 500; }
.actions button { height: 92px; border-radius: 8px; display: flex; align-items: center; justify-content: center; padding: 0; }
.btn-back { width: 207px; border: 2px solid #2d3a87; background: none; color: #2d3a87; }
.btn-back svg { transform: scaleX(-1); margin: 0 20px 0 1px; }
.btn-next { width: 261px; border: 0; background: #2d3a87; color: #fff; letter-spacing: .1px; box-shadow: 0 4px 8px rgba(0,0,0,.2); }
.btn-next svg { margin: 0 7px 0 15px; }
.next { position: relative; }
.mark-next { left: -58px; top: -43px; width: 377px; height: 182px; }

/* footer */
.footer { flex: 1; background: #edeef4; padding: 32px 0 0 320px; display: flex; align-items: flex-start; color: #5c5e62; }
.emblem { width: 51px; height: 85px; color: #222; }
.gov { margin: 16px 0 0 23px; display: flex; flex-direction: column; white-space: nowrap; }
.gov b { font: 700 34px/38px "Liberation Serif", serif; letter-spacing: 1.300px; }
.gov span { font: 400 20px/24px "Liberation Sans", sans-serif; letter-spacing: .12px; }
.legal { width: 1300px; margin-left: auto; margin-right: 320px; text-align: right; font-size: 24px; line-height: 42px; white-space: nowrap; }
.links, .legal b { font-weight: 500; }
.copy { font-family: "Liberation Sans", sans-serif; font-size: 29px; line-height: 20px; }

/* dock */
.dock { position: relative; z-index: 2; width: 1683px; height: 98px; margin: 4px 1px 0 0; flex: none; border: 2px solid #78849e; border-radius: 28px; background: #56637f; box-shadow: 0 0 80px rgba(0,0,0,.24); display: flex; padding-left: 3px; }
.app { width: 80px; flex: none; display: flex; flex-direction: column; align-items: center; padding-top: 13px; position: relative; }
.app svg { width: 62px; height: 62px; overflow: visible; filter: drop-shadow(0 1px 2px rgba(0,0,0,.3)); }
.app.run::after { content: ""; width: 8px; height: 8px; margin-top: 9px; border-radius: 50%; background: #05070c; }
.dsep { width: 2px; height: 70px; margin: 12px 17px 0; background: #2f3d5c; flex: none; }
.badge { position: absolute; right: 0; top: 5px; width: 30px; height: 30px; border-radius: 50%; background: #e04a3f; color: #fff; font: 400 20px/30px Inter, sans-serif; text-align: center; }
```
